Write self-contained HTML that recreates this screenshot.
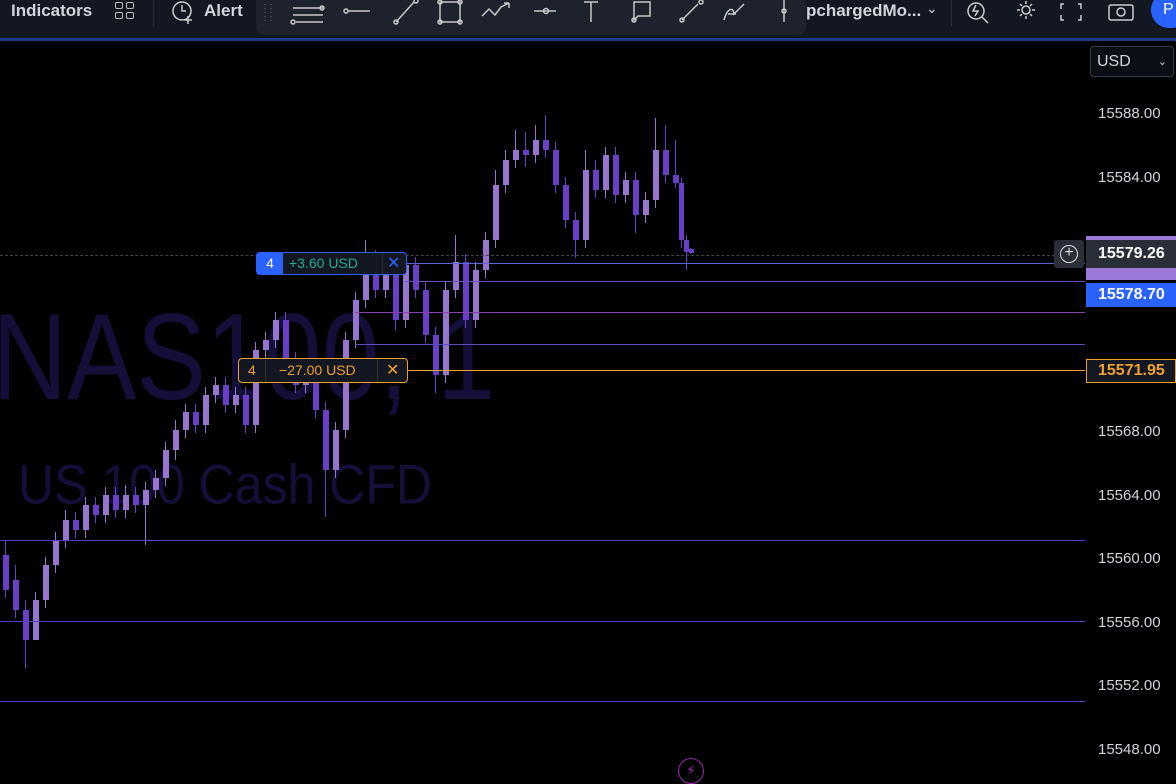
<!DOCTYPE html>
<html><head><meta charset="utf-8"><style>
*{margin:0;padding:0;box-sizing:border-box}
body{width:1176px;height:777px;background:#000;overflow:hidden;position:relative;font-family:"Liberation Sans","DejaVu Sans",sans-serif;color:#d1d4dc}
.top{position:absolute;left:0;top:0;width:1176px;height:38px;background:#131722}
.blue{position:absolute;left:0;top:38px;width:1176px;height:3px;background:#1e3a8a}
.tb{position:absolute;left:256px;top:0;width:550px;height:35px;background:#1e222d;border-radius:0 0 8px 8px}
.t{position:absolute;font-size:17px;color:#d1d4dc}
.wm1{position:absolute;left:-8px;top:288px;font-size:104px;color:#130f38;white-space:nowrap;transform:scaleY(1.18);transform-origin:0 0}
.wm2{position:absolute;left:18px;top:452px;font-size:50px;color:#130f38;white-space:nowrap;transform:scaleY(1.12);transform-origin:0 0}
.pl{position:absolute;left:1098px;font-size:15px;color:#d1d4dc}
.hl{position:absolute;height:0;border-top:1px solid}
</style></head><body>
<div class="wm1">NAS100, 1</div>
<div class="wm2">US 100 Cash CFD</div>
<svg width="1090" height="777" style="position:absolute;left:0;top:0">
<g fill="#9575cd">
<rect x="35" y="592" width="1" height="16"/><rect x="33" y="600" width="6" height="40"/>
<rect x="45" y="557" width="1" height="51"/><rect x="43" y="565" width="6" height="35"/>
<rect x="55" y="532" width="1" height="41"/><rect x="53" y="540" width="6" height="25"/>
<rect x="65" y="510" width="1" height="38"/><rect x="63" y="520" width="6" height="20"/>
<rect x="85" y="497" width="1" height="41"/><rect x="83" y="505" width="6" height="25"/>
<rect x="105" y="487" width="1" height="36"/><rect x="103" y="495" width="6" height="20"/>
<rect x="125" y="485" width="1" height="33"/><rect x="123" y="495" width="6" height="15"/>
<rect x="145" y="482" width="1" height="63"/><rect x="143" y="490" width="6" height="15"/>
<rect x="155" y="470" width="1" height="28"/><rect x="153" y="478" width="6" height="12"/>
<rect x="165" y="442" width="1" height="44"/><rect x="163" y="450" width="6" height="28"/>
<rect x="175" y="420" width="1" height="40"/><rect x="173" y="430" width="6" height="20"/>
<rect x="185" y="404" width="1" height="34"/><rect x="183" y="412" width="6" height="18"/>
<rect x="205" y="387" width="1" height="46"/><rect x="203" y="395" width="6" height="30"/>
<rect x="215" y="377" width="1" height="26"/><rect x="213" y="385" width="6" height="10"/>
<rect x="235" y="387" width="1" height="26"/><rect x="233" y="395" width="6" height="10"/>
<rect x="255" y="342" width="1" height="91"/><rect x="253" y="350" width="6" height="75"/>
<rect x="265" y="332" width="1" height="26"/><rect x="263" y="340" width="6" height="10"/>
<rect x="275" y="312" width="1" height="36"/><rect x="273" y="320" width="6" height="20"/>
<rect x="305" y="367" width="1" height="26"/><rect x="303" y="375" width="6" height="10"/>
<rect x="335" y="422" width="1" height="56"/><rect x="333" y="430" width="6" height="40"/>
<rect x="345" y="332" width="1" height="106"/><rect x="343" y="340" width="6" height="90"/>
<rect x="355" y="292" width="1" height="56"/><rect x="353" y="300" width="6" height="40"/>
<rect x="365" y="240" width="1" height="68"/><rect x="363" y="260" width="6" height="40"/>
<rect x="385" y="262" width="1" height="36"/><rect x="383" y="275" width="6" height="15"/>
<rect x="405" y="257" width="1" height="71"/><rect x="403" y="265" width="6" height="55"/>
<rect x="445" y="282" width="1" height="101"/><rect x="443" y="290" width="6" height="85"/>
<rect x="455" y="235" width="1" height="63"/><rect x="453" y="262" width="6" height="28"/>
<rect x="475" y="262" width="1" height="66"/><rect x="473" y="270" width="6" height="50"/>
<rect x="485" y="232" width="1" height="46"/><rect x="483" y="240" width="6" height="30"/>
<rect x="495" y="170" width="1" height="78"/><rect x="493" y="185" width="6" height="55"/>
<rect x="505" y="150" width="1" height="43"/><rect x="503" y="160" width="6" height="25"/>
<rect x="515" y="130" width="1" height="38"/><rect x="513" y="150" width="6" height="10"/>
<rect x="535" y="125" width="1" height="38"/><rect x="533" y="140" width="6" height="15"/>
<rect x="585" y="150" width="1" height="98"/><rect x="583" y="170" width="6" height="70"/>
<rect x="605" y="147" width="1" height="51"/><rect x="603" y="155" width="6" height="35"/>
<rect x="625" y="172" width="1" height="31"/><rect x="623" y="180" width="6" height="15"/>
<rect x="645" y="192" width="1" height="31"/><rect x="643" y="200" width="6" height="15"/>
<rect x="655" y="118" width="1" height="90"/><rect x="653" y="150" width="6" height="50"/>
</g>
<g fill="#6a3fc8">
<rect x="5" y="540" width="1" height="58"/><rect x="3" y="555" width="6" height="35"/>
<rect x="15" y="565" width="1" height="53"/><rect x="13" y="580" width="6" height="30"/>
<rect x="25" y="600" width="1" height="68"/><rect x="23" y="610" width="6" height="30"/>
<rect x="75" y="512" width="1" height="26"/><rect x="73" y="520" width="6" height="10"/>
<rect x="95" y="497" width="1" height="26"/><rect x="93" y="505" width="6" height="10"/>
<rect x="115" y="487" width="1" height="31"/><rect x="113" y="495" width="6" height="15"/>
<rect x="135" y="487" width="1" height="26"/><rect x="133" y="495" width="6" height="10"/>
<rect x="195" y="404" width="1" height="29"/><rect x="193" y="412" width="6" height="13"/>
<rect x="225" y="377" width="1" height="36"/><rect x="223" y="385" width="6" height="20"/>
<rect x="245" y="387" width="1" height="46"/><rect x="243" y="395" width="6" height="30"/>
<rect x="285" y="312" width="1" height="56"/><rect x="283" y="320" width="6" height="40"/>
<rect x="295" y="352" width="1" height="41"/><rect x="293" y="360" width="6" height="25"/>
<rect x="315" y="367" width="1" height="51"/><rect x="313" y="375" width="6" height="35"/>
<rect x="325" y="402" width="1" height="115"/><rect x="323" y="410" width="6" height="60"/>
<rect x="375" y="250" width="1" height="48"/><rect x="373" y="260" width="6" height="30"/>
<rect x="395" y="267" width="1" height="63"/><rect x="393" y="275" width="6" height="45"/>
<rect x="415" y="257" width="1" height="41"/><rect x="413" y="265" width="6" height="25"/>
<rect x="425" y="282" width="1" height="61"/><rect x="423" y="290" width="6" height="45"/>
<rect x="435" y="327" width="1" height="66"/><rect x="433" y="335" width="6" height="40"/>
<rect x="465" y="254" width="1" height="74"/><rect x="463" y="262" width="6" height="58"/>
<rect x="525" y="132" width="1" height="35"/><rect x="523" y="150" width="6" height="5"/>
<rect x="545" y="115" width="1" height="43"/><rect x="543" y="140" width="6" height="10"/>
<rect x="555" y="142" width="1" height="51"/><rect x="553" y="150" width="6" height="35"/>
<rect x="565" y="177" width="1" height="51"/><rect x="563" y="185" width="6" height="35"/>
<rect x="575" y="212" width="1" height="46"/><rect x="573" y="220" width="6" height="20"/>
<rect x="595" y="160" width="1" height="38"/><rect x="593" y="170" width="6" height="20"/>
<rect x="615" y="147" width="1" height="56"/><rect x="613" y="155" width="6" height="40"/>
<rect x="635" y="172" width="1" height="61"/><rect x="633" y="180" width="6" height="35"/>
<rect x="665" y="125" width="1" height="58"/><rect x="663" y="150" width="6" height="25"/>
<rect x="675" y="140" width="1" height="48"/><rect x="673" y="175" width="6" height="8"/>
<rect x="681" y="178" width="1" height="70"/><rect x="679" y="183" width="5" height="57"/>
<rect x="686" y="235" width="1" height="35"/><rect x="684" y="240" width="5" height="12"/>
<rect x="690" y="248" width="1" height="6"/><rect x="689" y="249" width="5" height="4"/>
</g>
</svg>
<div class="hl" style="left:0;top:255px;width:1060px;border-top:1px dashed #444"></div>
<div class="hl" style="left:405px;top:263px;width:680px;border-color:#5b63d8"></div>
<div class="hl" style="left:405px;top:281px;width:680px;border-color:#6a4ec0"></div>
<div class="hl" style="left:355px;top:312px;width:730px;border-color:#8a3fb0"></div>
<div class="hl" style="left:355px;top:344px;width:730px;border-color:#5a4ec0"></div>
<div class="hl" style="left:405px;top:370px;width:680px;border-color:#f0a030"></div>
<div class="hl" style="left:0;top:540px;width:1085px;border-color:#5040c8"></div>
<div class="hl" style="left:0;top:621px;width:1085px;border-color:#5040c8"></div>
<div class="hl" style="left:0;top:701px;width:1085px;border-color:#5040c8"></div>
<div style="position:absolute;left:256px;top:252px;width:151px;height:23px;border:1px solid #2962ff;border-radius:4px;background:#131722;font-size:14px">
<div style="position:absolute;left:0;top:0;width:26px;height:21px;background:#2962ff;color:#fff;text-align:center;line-height:21px">4</div>
<div style="position:absolute;left:32px;top:0;line-height:21px;color:#22ab94">+3.60 USD</div>
<div style="position:absolute;left:125px;top:0;width:1px;height:21px;background:#2a2e39"></div>
<div style="position:absolute;left:130px;top:0;line-height:21px;color:#2962ff;font-size:16px">✕</div></div>
<div style="position:absolute;left:238px;top:358px;width:170px;height:25px;border:1px solid #f0a030;border-radius:4px;background:#131722;font-size:14px;color:#f0a030">
<div style="position:absolute;left:9px;top:0;line-height:23px">4</div>
<div style="position:absolute;left:26px;top:0;width:1px;height:23px;background:#3a3020"></div>
<div style="position:absolute;left:40px;top:0;line-height:23px">−27.00 USD</div>
<div style="position:absolute;left:138px;top:0;width:1px;height:23px;background:#3a3020"></div>
<div style="position:absolute;left:147px;top:0;line-height:23px;font-size:16px">✕</div></div>
<div class="pl" style="top:105px">15588.00</div>
<div class="pl" style="top:169px">15584.00</div>
<div class="pl" style="top:423px">15568.00</div>
<div class="pl" style="top:487px">15564.00</div>
<div class="pl" style="top:550px">15560.00</div>
<div class="pl" style="top:614px">15556.00</div>
<div class="pl" style="top:677px">15552.00</div>
<div class="pl" style="top:741px">15548.00</div>
<div style="position:absolute;left:1086px;top:236px;width:90px;height:44px;background:#9a7ad8"></div>
<div style="position:absolute;left:1086px;top:240px;width:90px;height:28px;background:#2a2e39;color:#fff;font-size:16px;font-weight:bold;line-height:28px;padding-left:12px">15579.26</div>
<div style="position:absolute;left:1054px;top:240px;width:30px;height:28px;background:#2a2e39;border-radius:3px"><div style="position:absolute;left:6px;top:5px;width:18px;height:18px;border:1.5px solid #ddd;border-radius:50%;color:#ddd;font-size:16px;line-height:14px;text-align:center">+</div></div>
<div style="position:absolute;left:1086px;top:283px;width:90px;height:24px;background:#2962ff;color:#fff;font-size:16px;font-weight:bold;line-height:24px;padding-left:12px">15578.70</div>
<div style="position:absolute;left:1086px;top:359px;width:90px;height:24px;background:#131722;border:1px solid #f0a030;color:#f0a030;font-size:16px;font-weight:bold;line-height:22px;padding-left:11px">15571.95</div>
<div style="position:absolute;left:1090px;top:46px;width:84px;height:31px;border:1px solid #363a45;border-radius:4px;background:#0c0e15;font-size:16px;line-height:30px;padding-left:6px;color:#d1d4dc">USD<span style="position:absolute;right:6px;font-size:11px">⌄</span></div>
<div style="position:absolute;left:678px;top:758px;width:26px;height:26px;border:1.5px solid #9c27b0;border-radius:50%;color:#9c27b0;text-align:center;font-size:14px;line-height:22px">⚡</div>
<div class="top"></div><div class="blue"></div>
<div class="t" style="left:11px;top:1px;font-weight:bold">Indicators</div>
<div style="position:absolute;left:115px;top:2px;width:20px;height:18px">
<div style="position:absolute;left:0;top:0;width:8px;height:7px;border:1.5px solid #bbb;border-radius:2px"></div><div style="position:absolute;left:11px;top:0;width:8px;height:7px;border:1.5px solid #bbb;border-radius:2px"></div><div style="position:absolute;left:0;top:10px;width:8px;height:7px;border:1.5px solid #bbb;border-radius:2px"></div><div style="position:absolute;left:11px;top:10px;width:8px;height:7px;border:1.5px solid #bbb;border-radius:2px"></div></div>
<div style="position:absolute;left:153px;top:0;width:1px;height:26px;background:#2a2e39"></div>
<svg style="position:absolute;left:170px;top:0" width="28" height="26" fill="none" stroke="#ccc" stroke-width="1.5"><circle cx="12" cy="11" r="9"/><path d="M12 5v6h4M18 16v8M14 20h8"/></svg>
<div class="t" style="left:204px;top:1px;font-weight:bold">Alert</div>
<div class="tb"></div>
<svg style="position:absolute;left:256px;top:0" width="550" height="34" fill="none" stroke="#c8c8c8" stroke-width="1.5">
<g stroke="#555" stroke-dasharray="1 3"><path d="M9 4v18M15 4v18"/></g>
<path d="M37 8h30M37 15h30M40 22h27"/><circle cx="66" cy="8" r="2"/><circle cx="37" cy="22" r="2"/>
<path d="M92 11h22"/><circle cx="90" cy="11" r="2"/>
<path d="M140 22l18-20"/><circle cx="140" cy="22" r="2"/><circle cx="160" cy="1" r="2"/>
<rect x="184" y="2" width="20" height="20"/><circle cx="184" cy="22" r="2"/><circle cx="204" cy="22" r="2"/><circle cx="184" cy="2" r="2"/><circle cx="204" cy="2" r="2"/>
<path d="M226 16l7-7 6 6 6-8 8-4M253 3v5M253 3h-5"/>
<path d="M278 11h22"/><circle cx="290" cy="11" r="2.5"/>
<path d="M328 2h14M335 2v20"/>
<path d="M378 2h16v14h-12l-4 4z"/><circle cx="378" cy="20" r="2"/>
<path d="M426 20l16-16"/><circle cx="426" cy="20" r="2"/><circle cx="445" cy="2" r="2"/>
<path d="M468 20c4-14 10-12 10-6l10-10M472 14h8"/>
<path d="M528 0v22"/><circle cx="528" cy="11" r="2"/>
</svg>
<div class="t" style="left:806px;top:1px;font-weight:bold">pchargedMo...</div>
<div style="position:absolute;left:926px;top:0;color:#ccc;font-size:14px">⌄</div>
<div style="position:absolute;left:951px;top:0;width:1px;height:26px;background:#2a2e39"></div>
<svg style="position:absolute;left:964px;top:0" width="200" height="26" fill="none" stroke="#ccc" stroke-width="1.5">
<circle cx="12" cy="11" r="8"/><path d="M18 17l6 6M12 5l-3 6h5l-3 5"/>
<circle cx="62" cy="10" r="4"/><path d="M62 1v3M62 16v3M53 10h3M68 10h3M56 4l2 2M66 14l2 2M56 16l2-2M66 6l2-2"/>
<path d="M100 4h-3v5M114 4h3v5M100 20h-3v-5M114 20h3v-5"/>
<rect x="145" y="5" width="24" height="15" rx="2"/><circle cx="157" cy="12" r="4"/>
</svg>
<div style="position:absolute;left:1151px;top:-8px;width:40px;height:36px;background:#2962ff;border-radius:18px;color:#fff;font-size:16px;padding:9px 0 0 12px">P</div>
</body></html>
